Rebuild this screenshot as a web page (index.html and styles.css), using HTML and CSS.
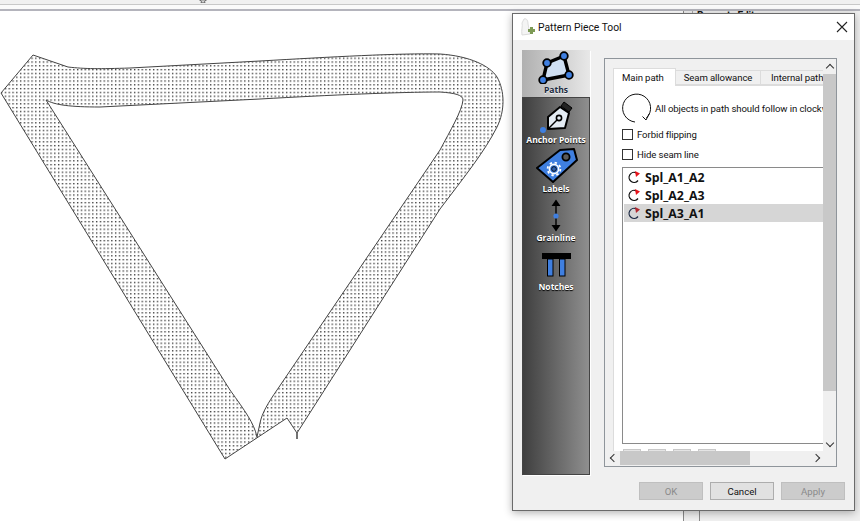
FILE: index.html
```html
<!DOCTYPE html>
<html lang="en">
<head>
<meta charset="utf-8">
<title>Pattern Piece Tool</title>
<link rel="stylesheet" href="styles.css">
</head>
<body>
<div class="app">
  <div class="topbar">
    <svg class="star" width="8" height="3" viewBox="0 0 8 3" aria-hidden="true"><path d="M0.5 0 L7.5 0 L5.5 1.2 L6 3 L4 2 L2 3 L2.5 1.2 Z" fill="none" stroke="#555" stroke-width="0.8"/></svg>
  </div>
  <div class="workspace">
    <main class="canvas">
      <svg class="piece" width="510" height="510" viewBox="0 0 510 510" aria-hidden="true">
        <defs>
          <pattern id="dots" width="3.8" height="3.8" patternUnits="userSpaceOnUse">
            <rect x="1" y="1" width="1.3" height="1.3" fill="#222"/>
          </pattern>
        </defs>
        <path d="M1 82 L33 44 L68 56 C85 58 100 58 130 57 L260 50 C330 46 400 42 440 43 C470 45 490 55 497 66 C505 80 505 100 497 116 C485 140 465 165 440 198 L320 386 L297 422 L297 428 L297 422 L287 407 L225 448 Z M46 89 C55 94 70 96 100 96 L260 88 C330 84 400 81 440 81 C455 82 463 84 463 89 C462 100 450 120 440 139 L277 379 C268 392 262 402 260 412 L257 426 C254 412 245 400 230 379 Z" fill="url(#dots)" fill-rule="evenodd" stroke="#444" stroke-width="1" stroke-linejoin="round"/>
      </svg>
    </main>
    <div class="gutter"></div>
    <aside class="behind">
      <div class="behind-head">Property Editor</div>
      <div class="behind-foot"></div>
    </aside>
  </div>
  <section class="dialog">
    <header class="titlebar">
      <svg class="appicon" width="16" height="18" viewBox="0 0 16 18" aria-hidden="true">
        <path d="M4 1 C7 0 8 3 8 6 L10 16 L2 17 C1 12 3 8 2 5 Z" fill="#f4f4f4" stroke="#dcdcdc"/>
        <path d="M10 9 L13 9 L13 11 L15 11 L15 14 L13 14 L13 16 L10 16 L10 14 L8 14 L8 11 L10 11 Z" fill="#7d9a55"/>
      </svg>
      <span class="title">Pattern Piece Tool</span>
      <svg class="close" width="12" height="12" viewBox="0 0 12 12" aria-hidden="true"><path d="M1 1 L11 11 M11 1 L1 11" stroke="#222" stroke-width="1.1"/></svg>
    </header>
    <div class="body">
      <nav class="side">
        <div class="side-item active">
          <svg width="40" height="36" viewBox="0 0 40 36" aria-hidden="true">
            <path d="M11 15 L28 8 L33 27 L7 32 Z" fill="#cfdff2" stroke="#000" stroke-width="3.4" stroke-linejoin="round"/>
            <g fill="#3f7fe0" stroke="#000" stroke-width="1.8"><circle cx="7" cy="32" r="3.8"/><circle cx="11" cy="15" r="3.8"/><circle cx="28" cy="8" r="3.8"/><circle cx="33" cy="27" r="3.8"/></g>
          </svg>
          <span>Paths</span>
        </div>
        <div class="side-item">
          <svg width="40" height="36" viewBox="0 0 40 36" aria-hidden="true">
            <path d="M28 4 L36 10 L33 14 L25 8 Z" fill="#222" stroke="#000"/>
            <path d="M24 9 L33 15 L29 30 L12 31 L12 19 Z" fill="#e4ecf4" stroke="#000" stroke-width="2" stroke-linejoin="round"/>
            <path d="M13 30 L21 22" stroke="#000" stroke-width="1.5"/>
            <circle cx="23" cy="20" r="2.6" fill="none" stroke="#000" stroke-width="1.6"/>
            <circle cx="7" cy="32" r="3" fill="#3f7fe0"/>
          </svg>
          <span>Anchor Points</span>
        </div>
        <div class="side-item">
          <svg width="44" height="36" viewBox="0 0 44 36" aria-hidden="true">
            <path d="M3 21 L26 3 L40 2 L43 13 L19 35 Z" fill="#3f7fe0" stroke="#000" stroke-width="2" stroke-linejoin="round"/>
            <circle cx="32" cy="10" r="3.6" fill="#5a5a5a" stroke="#000" stroke-width="1.8"/>
            <circle cx="20" cy="22" r="4.6" fill="none" stroke="#fff" stroke-width="1.6"/>
            <circle cx="20" cy="22" r="6.4" fill="none" stroke="#fff" stroke-width="1.8" stroke-dasharray="2.4 2.6"/>
            <circle cx="20" cy="22" r="2.4" fill="#2d5fae" stroke="#000" stroke-width="0.8"/>
          </svg>
          <span>Labels</span>
        </div>
        <div class="side-item">
          <svg width="16" height="36" viewBox="0 0 16 36" aria-hidden="true">
            <path d="M8 6 V33" stroke="#000" stroke-width="1.4"/>
            <path d="M3.5 10 L8 3.5 L12.5 10 Z M3.5 29 L8 35.5 L12.5 29 Z" fill="#000"/>
            <circle cx="8" cy="20" r="2.6" fill="#3f7fe0"/>
          </svg>
          <span>Grainline</span>
        </div>
        <div class="side-item">
          <svg width="32" height="36" viewBox="0 0 32 36" aria-hidden="true">
            <rect x="2" y="8" width="29" height="6" fill="#000"/>
            <rect x="7.5" y="14" width="5.5" height="17" fill="#3f7fe0" stroke="#000"/>
            <rect x="19.5" y="14" width="5.5" height="17" fill="#3f7fe0" stroke="#000"/>
          </svg>
          <span>Notches</span>
        </div>
      </nav>
      <div class="panel">
        <div class="scrollview">
          <div class="viewport">
            <div class="tabs">
              <div class="tab current">Main path</div>
              <div class="tab seam">Seam allowance</div>
              <div class="tab last">Internal paths</div>
            </div>
            <div class="tabpage">
              <div class="hint">
                <svg width="31" height="31" viewBox="0 0 31 31" aria-hidden="true">
                  <path d="M13 29 A14 14 0 1 1 24.5 25" fill="none" stroke="#111" stroke-width="1"/>
                  <path d="M20.5 23.5 L24 27 L27 21" fill="none" stroke="#111" stroke-width="1"/>
                </svg>
                <span>All objects in path should follow in clockwise direction.</span>
              </div>
              <label class="check"><i></i>Forbid flipping</label>
              <label class="check"><i></i>Hide seam line</label>
              <ul class="list">
                <li><svg width="14" height="14" viewBox="0 0 14 14" aria-hidden="true"><path d="M11 10.5 A5 5 0 1 1 9.5 3" fill="none" stroke="#111" stroke-width="1.3"/><path d="M8 1 L13 3.5 L9 7 Z" fill="#e8141c"/></svg>Spl_A1_A2</li>
                <li><svg width="14" height="14" viewBox="0 0 14 14" aria-hidden="true"><path d="M11 10.5 A5 5 0 1 1 9.5 3" fill="none" stroke="#111" stroke-width="1.3"/><path d="M8 1 L13 3.5 L9 7 Z" fill="#e8141c"/></svg>Spl_A2_A3</li>
                <li class="selected"><svg width="14" height="14" viewBox="0 0 14 14" aria-hidden="true"><path d="M11 10.5 A5 5 0 1 1 9.5 3" fill="none" stroke="#1d2a44" stroke-width="1.3"/><path d="M8 1 L13 3.5 L9 7 Z" fill="#b3272e"/></svg>Spl_A3_A1</li>
              </ul>
              <div class="stubs"><b></b><b></b><b></b><b></b></div>
            </div>
          </div>
          <div class="vbar"><span class="up"></span><div class="vthumb"></div><span class="down"></span></div>
          <div class="hbar"><span class="left"></span><div class="hthumb"></div><span class="right"></span></div>
          <div class="corner"></div>
        </div>
      </div>
    </div>
    <footer class="buttons">
      <button class="btn" disabled>OK</button>
      <button class="btn primary">Cancel</button>
      <button class="btn" disabled>Apply</button>
    </footer>
  </section>
</div>
</body>
</html>
```
FILE: styles.css
```css
* { box-sizing: border-box; }
html, body { margin: 0; padding: 0; }
body { width: 860px; height: 521px; overflow: hidden; background: #fff; font-family: Roboto, "Open Sans", sans-serif; font-size: 9.6px; letter-spacing: -0.1px; color: #111; }
.app { position: relative; width: 860px; height: 521px; display: flex; flex-direction: column; }
.topbar { height: 11px; flex: none; background: #f0f0f0; border-bottom: 2px solid #b4b4bc; box-shadow: inset 0 -4px 0 #fafafa, inset 0 -5px 0 #c8c8c8; padding-left: 199px; }
.star { display: block; }
.workspace { flex: 1; display: flex; min-height: 0; }
.canvas { width: 684px; flex: none; background: #fff; border-right: 1px solid #8a8a8a; overflow: hidden; }
.piece { display: block; }
.gutter { width: 8px; flex: none; background: #f0f0f0; }
.behind { flex: 1; background: #f0f0f0; display: flex; flex-direction: column; justify-content: space-between; }
.behind-head { font-weight: 700; font-size: 10px; height: 12px; padding-left: 4px; line-height: 10px; overflow: hidden; border-left: 1px solid #aaa; white-space: nowrap; }
.behind-foot { height: 10px; margin-left: 7px; border-left: 1px solid #8a8a8a; }
.dialog { position: absolute; left: 512px; top: 13px; width: 343px; height: 498px; background: #f0f0f0; border: 1px solid #6a6a6a; box-shadow: 0 2px 8px rgba(0,0,0,.3); display: flex; flex-direction: column; }
.titlebar { height: 26px; flex: none; background: #fff; display: flex; align-items: center; padding: 0 6px 0 7px; gap: 2px; }
.title { flex: 1; font-size: 10.3px; letter-spacing: 0; color: #111; }
.appicon { flex: none; }
.body { flex: 1; display: flex; gap: 14px; padding: 10px 17px 0 9px; min-height: 0; }
.side { width: 68px; height: 425px; flex: none; background: linear-gradient(90deg, #3f3f3f, #8f8f8f); border: 1px solid #444; border-top: 0; box-shadow: 1px 1px 0 #fff; display: flex; flex-direction: column; font-family: "Open Sans", sans-serif; letter-spacing: 0; }
.side-item { height: 49px; display: flex; flex-direction: column; align-items: center; justify-content: flex-end; font-weight: 700; font-size: 8.5px; line-height: 11px; color: #fff; text-shadow: 0 1px 1px #000; padding-bottom: 2px; white-space: nowrap; }
.side-item svg { display: block; flex: none; }
.side-item.active { height: 48px; background: linear-gradient(90deg, #b0b0b0, #e8e8e8); color: #1b2a40; text-shadow: 0 1px 0 #eee; border-bottom: 1px solid #444; margin: 0 -1px; }
.panel { width: 233px; height: 409px; margin-top: 8px; flex: none; background: #f0f0f0; border: 1px solid #8f959b; padding: 1px 0 1px 1px; }
.scrollview { width: 100%; height: 100%; display: grid; grid-template-columns: 1fr 13px; grid-template-rows: 1fr 14px; min-height: 0; }
.viewport { overflow: hidden; background: #f0f0f0; padding: 7px 0 0 7px; min-height: 0; min-width: 0; }
.tabs { display: flex; width: 300px; height: 18px; align-items: flex-end; }
.tab { height: 15px; line-height: 14px; background: #f0f0f0; border: 1px solid #dcdcdc; border-left: 0; white-space: nowrap; color: #111; }
.tab.current { height: 18px; width: 63px; padding-left: 8px; line-height: 17px; background: #fff; border: 1px solid #dcdcdc; border-bottom: 0; position: relative; top: 1px; }
.tab.seam { width: 85px; text-align: center; }
.tab.last { padding: 0 8px 0 10px; }
.tabpage { width: 300px; height: 380px; background: #fff; border-top: 1px solid #dcdcdc; border-left: 1px solid #dcdcdc; padding: 7px 0 0 8px; }
.hint { display: flex; align-items: center; gap: 2px; height: 31px; white-space: nowrap; }
.hint svg { flex: none; }
.check { display: flex; align-items: center; gap: 4px; height: 20px; white-space: nowrap; }
.check i { width: 11px; height: 11px; background: #fff; border: 1px solid #333; display: block; }
.list { list-style: none; margin: 3px 0 0; padding: 0 0 0 1px; width: 280px; height: 277px; border: 1px solid #8a8a8a; background: #fff; }
.list li { height: 18px; display: flex; align-items: center; gap: 4px; padding-left: 3px; font-family: "Open Sans", sans-serif; font-weight: 700; font-size: 12.3px; letter-spacing: 0; color: #111; }
.list li.selected { background: #d6d6d6; }
.list svg { flex: none; }
.stubs { display: flex; gap: 7px; margin-top: 5px; padding-left: 1px; }
.stubs b { width: 18px; height: 4px; background: #e4e4e4; border: 1px solid #c8c8c8; border-bottom: 0; display: block; }
.vbar { background: #f0f0f0; display: flex; flex-direction: column; min-height: 0; }
.vthumb { flex: 1; background: #c8c8c8; margin-bottom: 46px; }
.up, .down, .left, .right { flex: none; display: flex; align-items: center; justify-content: center; width: 13px; height: 14px; }
.up::after, .down::after, .left::after, .right::after { content: ""; width: 5px; height: 5px; border: solid #333; border-width: 1.5px 0 0 1.5px; }
.up::after { transform: translateY(1px) rotate(45deg); }
.down::after { transform: translateY(-1px) rotate(225deg); }
.left::after { transform: translateX(1px) rotate(-45deg); }
.right::after { transform: translateX(-1px) rotate(135deg); }
.hbar { background: #f0f0f0; display: flex; }
.left { width: 14px; }
.hthumb { width: 130px; background: #c8c8c8; }
.right { margin-left: auto; }
.corner { background: #f0f0f0; }
.buttons { height: 41px; flex: none; display: flex; justify-content: flex-end; align-items: flex-start; gap: 7px; padding: 13px 9px 0 0; }
.btn { width: 64px; height: 18px; padding: 0; font: inherit; background: #e1e1e1; border: 1px solid #adadad; color: #111; }
.btn:disabled { background: #ccc; border-color: #bfbfbf; color: #8a8a8a; }
```
